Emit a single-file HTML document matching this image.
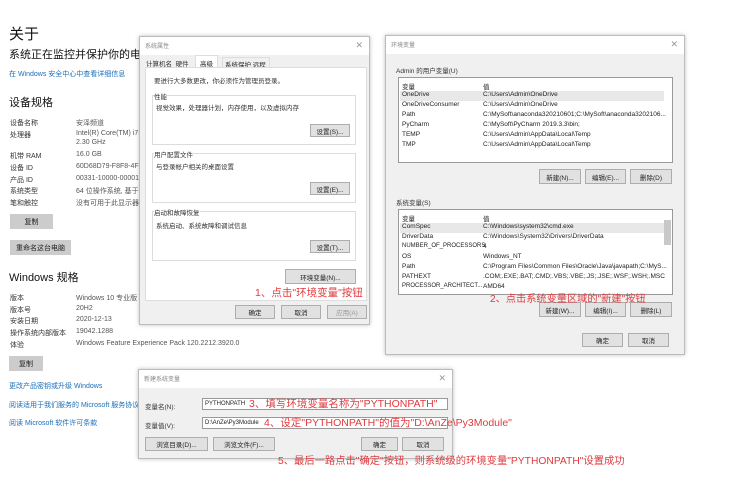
<!DOCTYPE html>
<html><head><meta charset="utf-8">
<style>
*{margin:0;padding:0;box-sizing:border-box}
body{width:744px;height:500px;background:#fff;position:relative;overflow:hidden;font-family:"Liberation Sans","Noto Sans CJK SC",sans-serif;color:#222}
.a{position:absolute;white-space:nowrap}
.s{font-size:7px;color:#333}
.lv{font-size:7px;color:#555}
.btn{position:absolute;background:#e1e1e1;border:1px solid #adadad;font-size:6.5px;text-align:center;color:#222;display:flex;align-items:center;justify-content:center}
.gb{position:absolute;background:#ccc;font-size:7px;display:flex;align-items:center;justify-content:center;color:#222}
.dlg{position:absolute;background:#f0f0f0;border:1px solid #bbb;box-shadow:0 0 4px rgba(0,0,0,.25)}
.tt{position:absolute;left:0;right:0;top:0;height:18px;background:#fff;font-size:6px;color:#888;padding:4px 5px}
.x{position:absolute;right:6px;top:3px;font-size:9px;color:#999}
.red{position:absolute;color:#e03a3e;white-space:nowrap;font-family:"Liberation Sans","Noto Sans CJK SC",sans-serif}
.grp{position:absolute;border:1px solid #dcdcdc;background:#fff}
.list{position:absolute;background:#fff;border:1px solid #999;overflow:hidden}
.row{position:absolute;left:3px;font-size:6.5px;color:#222;white-space:nowrap}
.link{font-size:7px;color:#1a6fb8}
</style></head><body>
<div class="a" style="left:9px;top:23px;font-size:15px;color:#111">关于</div>
<div class="a" style="left:9px;top:46px;font-size:11px;color:#111">系统正在监控并保护你的电脑。</div>
<div class="a link" style="left:9px;top:69px">在 Windows 安全中心中查看详细信息</div>
<div class="a" style="left:9px;top:94px;font-size:11px;color:#111">设备规格</div>
<div class="a s" style="left:10px;top:118px">设备名称</div><div class="a lv" style="left:76px;top:118px">安泽频道</div>
<div class="a s" style="left:10px;top:130px">处理器</div><div class="a lv" style="left:76px;top:130px">Intel(R) Core(TM) i7-1</div>
<div class="a lv" style="left:76px;top:139px">2.30 GHz</div>
<div class="a s" style="left:10px;top:151px">机带 RAM</div><div class="a lv" style="left:76px;top:151px">16.0 GB</div>
<div class="a s" style="left:10px;top:163px">设备 ID</div><div class="a lv" style="left:76px;top:163px">60D68D79-F8F8-4F7!</div>
<div class="a s" style="left:10px;top:175px">产品 ID</div><div class="a lv" style="left:76px;top:175px">00331-10000-00001-A</div>
<div class="a s" style="left:10px;top:186px">系统类型</div><div class="a lv" style="left:76px;top:186px">64 位操作系统, 基于 x</div>
<div class="a s" style="left:10px;top:198px">笔和触控</div><div class="a lv" style="left:76px;top:198px">没有可用于此显示器</div>
<div class="gb" style="left:10px;top:214px;width:43px;height:15px">复制</div>
<div class="gb" style="left:10px;top:240px;width:61px;height:15px">重命名这台电脑</div>
<div class="a" style="left:9px;top:269px;font-size:11px;color:#111">Windows 规格</div>
<div class="a s" style="left:10px;top:293px">版本</div><div class="a lv" style="left:76px;top:293px">Windows 10 专业版</div>
<div class="a s" style="left:10px;top:305px">版本号</div><div class="a lv" style="left:76px;top:305px">20H2</div>
<div class="a s" style="left:10px;top:316px">安装日期</div><div class="a lv" style="left:76px;top:316px">2020-12-13</div>
<div class="a s" style="left:10px;top:328px">操作系统内部版本</div><div class="a lv" style="left:76px;top:328px">19042.1288</div>
<div class="a s" style="left:10px;top:340px">体验</div><div class="a lv" style="left:76px;top:340px">Windows Feature Experience Pack 120.2212.3920.0</div>
<div class="gb" style="left:9px;top:356px;width:34px;height:15px">复制</div>
<div class="a link" style="left:9px;top:381px">更改产品密钥或升级 Windows</div>
<div class="a link" style="left:9px;top:400px">阅读适用于我们服务的 Microsoft 服务协议</div>
<div class="a link" style="left:9px;top:418px">阅读 Microsoft 软件许可条款</div>

<div class="dlg" style="left:139px;top:36px;width:231px;height:289px">
 <div class="tt">系统属性</div><div class="x">✕</div>
 <div class="a s" style="left:6px;top:21px;font-size:6.5px">计算机名&nbsp; 硬件</div>
 <div class="a" style="left:55px;top:18px;width:23px;height:13px;background:#fff;border:1px solid #ddd;border-bottom:none;font-size:6.5px;padding:2px 4px">高级</div>
 <div class="a" style="left:82px;top:20px;width:48px;height:10px;border:1px solid #ddd;border-bottom:none;font-size:6.5px;padding:1px 2px">系统保护 远程</div>
 <div class="a" style="left:5px;top:30px;width:222px;height:234px;background:#fff;border:1px solid #ddd"></div>
 <div class="a s" style="left:14px;top:38px;font-size:6.5px">要进行大多数更改，你必须作为管理员登录。</div>
 <div class="grp" style="left:12px;top:58px;width:204px;height:50px"></div>
 <div class="a s" style="left:14px;top:54px;font-size:6.5px;background:#fff">性能</div>
 <div class="a s" style="left:16px;top:65px;font-size:6.5px">视觉效果，处理器计划，内存使用，以及虚拟内存</div>
 <div class="btn" style="left:170px;top:87px;width:40px;height:13px">设置(S)...</div>
 <div class="grp" style="left:12px;top:116px;width:204px;height:50px"></div>
 <div class="a s" style="left:14px;top:112px;font-size:6.5px;background:#fff">用户配置文件</div>
 <div class="a s" style="left:16px;top:124px;font-size:6.5px">与登录帐户相关的桌面设置</div>
 <div class="btn" style="left:170px;top:145px;width:40px;height:13px">设置(E)...</div>
 <div class="grp" style="left:12px;top:174px;width:204px;height:50px"></div>
 <div class="a s" style="left:14px;top:170px;font-size:6.5px;background:#fff">启动和故障恢复</div>
 <div class="a s" style="left:16px;top:183px;font-size:6.5px">系统启动、系统故障和调试信息</div>
 <div class="btn" style="left:170px;top:203px;width:40px;height:13px">设置(T)...</div>
 <div class="btn" style="left:145px;top:232px;width:71px;height:15px">环境变量(N)...</div>
 <div class="btn" style="left:95px;top:268px;width:40px;height:14px">确定</div>
 <div class="btn" style="left:141px;top:268px;width:40px;height:14px">取消</div>
 <div class="btn" style="left:187px;top:268px;width:40px;height:14px;color:#999">应用(A)</div>
</div>
<div class="red" style="left:255px;top:285px;font-size:10.5px">1、点击"环境变量"按钮</div>

<div class="dlg" style="left:385px;top:35px;width:300px;height:320px">
 <div class="tt">环境变量</div><div class="x">✕</div>
 <div class="a s" style="left:10px;top:29px;font-size:6.5px">Admin 的用户变量(U)</div>
 <div class="list" style="left:12px;top:41px;width:275px;height:86px">
  <div class="row" style="top:3px">变量</div><div class="row" style="left:84px;top:3px">值</div>
  <div class="a" style="left:1px;top:13px;width:264px;height:10px;background:#e8e8e8"></div>
  <div class="row" style="top:13px">OneDrive</div><div class="row" style="left:84px;top:13px">C:\Users\Admin\OneDrive</div>
  <div class="row" style="top:23px">OneDriveConsumer</div><div class="row" style="left:84px;top:23px">C:\Users\Admin\OneDrive</div>
  <div class="row" style="top:33px">Path</div><div class="row" style="left:84px;top:33px">C:\MySoft\anaconda320210601;C:\MySoft\anaconda3202106...</div>
  <div class="row" style="top:43px">PyCharm</div><div class="row" style="left:84px;top:43px">C:\MySoft\PyCharm 2019.3.3\bin;</div>
  <div class="row" style="top:53px">TEMP</div><div class="row" style="left:84px;top:53px">C:\Users\Admin\AppData\Local\Temp</div>
  <div class="row" style="top:63px">TMP</div><div class="row" style="left:84px;top:63px">C:\Users\Admin\AppData\Local\Temp</div>
 </div>
 <div class="btn" style="left:153px;top:133px;width:42px;height:15px">新建(N)...</div>
 <div class="btn" style="left:199px;top:133px;width:41px;height:15px">编辑(E)...</div>
 <div class="btn" style="left:244px;top:133px;width:42px;height:15px">删除(D)</div>
 <div class="a s" style="left:10px;top:161px;font-size:6.5px">系统变量(S)</div>
 <div class="list" style="left:12px;top:173px;width:275px;height:86px">
  <div class="row" style="top:3px">变量</div><div class="row" style="left:84px;top:3px">值</div>
  <div class="a" style="left:1px;top:13px;width:264px;height:10px;background:#e8e8e8"></div>
  <div class="row" style="top:13px">ComSpec</div><div class="row" style="left:84px;top:13px">C:\Windows\system32\cmd.exe</div>
  <div class="row" style="top:23px">DriverData</div><div class="row" style="left:84px;top:23px">C:\Windows\System32\Drivers\DriverData</div>
  <div class="row" style="top:33px;font-size:6px">NUMBER_OF_PROCESSORS</div><div class="row" style="left:84px;top:33px">4</div>
  <div class="row" style="top:43px">OS</div><div class="row" style="left:84px;top:43px">Windows_NT</div>
  <div class="row" style="top:53px">Path</div><div class="row" style="left:84px;top:53px">C:\Program Files\Common Files\Oracle\Java\javapath;C:\MyS...</div>
  <div class="row" style="top:63px">PATHEXT</div><div class="row" style="left:84px;top:63px">.COM;.EXE;.BAT;.CMD;.VBS;.VBE;.JS;.JSE;.WSF;.WSH;.MSC</div>
  <div class="row" style="top:73px;font-size:6px">PROCESSOR_ARCHITECT...</div><div class="row" style="left:84px;top:73px">AMD64</div>
  <div class="a" style="right:1px;top:10px;width:7px;height:25px;background:#c8c8c8"></div>
 </div>
 <div class="btn" style="left:153px;top:266px;width:42px;height:15px">新建(W)...</div>
 <div class="btn" style="left:199px;top:266px;width:41px;height:15px">编辑(I)...</div>
 <div class="btn" style="left:244px;top:266px;width:42px;height:15px">删除(L)</div>
 <div class="btn" style="left:196px;top:297px;width:41px;height:14px">确定</div>
 <div class="btn" style="left:242px;top:297px;width:41px;height:14px">取消</div>
</div>
<div class="red" style="left:490px;top:290px;font-size:10.2px">2、点击系统变量区域的"新建"按钮</div>

<div class="dlg" style="left:138px;top:369px;width:315px;height:90px">
 <div class="tt">新建系统变量</div><div class="x">✕</div>
 <div class="a s" style="left:6px;top:31px;font-size:6.5px">变量名(N):</div>
 <div class="a" style="left:63px;top:28px;width:246px;height:12px;background:#fff;border:1px solid #999;font-size:6px;padding:2px 2px">PYTHONPATH</div>
 <div class="a s" style="left:6px;top:50px;font-size:6.5px">变量值(V):</div>
 <div class="a" style="left:63px;top:47px;width:246px;height:12px;background:#fff;border:1px solid #999;font-size:6px;padding:2px 2px">D:\AnZe\Py3Module</div>
 <div class="btn" style="left:6px;top:67px;width:63px;height:14px">浏览目录(D)...</div>
 <div class="btn" style="left:74px;top:67px;width:62px;height:14px">浏览文件(F)...</div>
 <div class="btn" style="left:222px;top:67px;width:37px;height:14px">确定</div>
 <div class="btn" style="left:263px;top:67px;width:42px;height:14px">取消</div>
</div>
<div class="red" style="left:249px;top:396px;font-size:10.5px">3、填写环境变量名称为"PYTHONPATH"</div>
<div class="red" style="left:264px;top:415px;font-size:10.5px">4、设定"PYTHONPATH"的值为"D:\AnZe\Py3Module"</div>
<div class="red" style="left:278px;top:452px;font-size:10.3px">5、最后一路点击"确定"按钮，则系统级的环境变量"PYTHONPATH"设置成功</div>
</body></html>
